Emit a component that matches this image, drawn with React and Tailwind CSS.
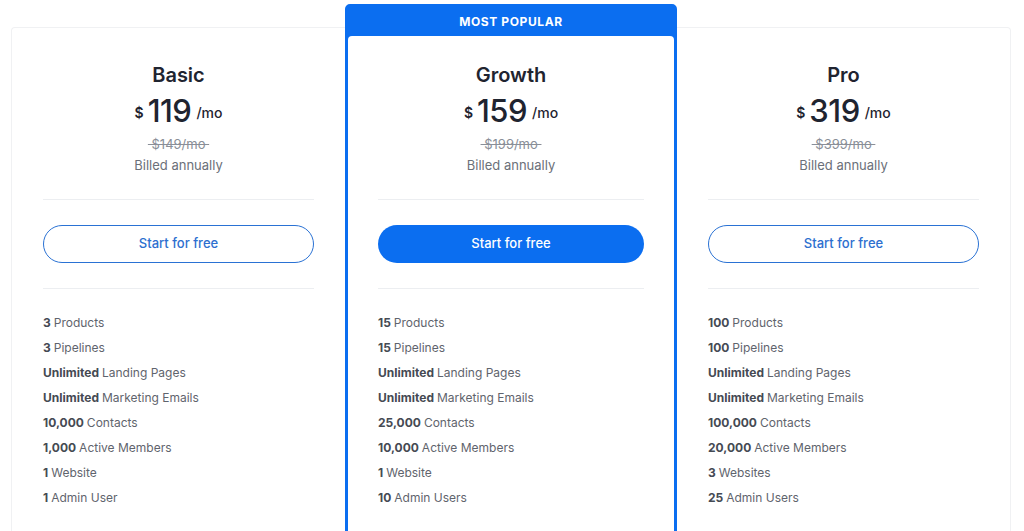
const plans = [
  {
    name: 'Basic',
    price: '119',
    old: '$149/mo',
    features: [
      ['3', 'Products'],
      ['3', 'Pipelines'],
      ['Unlimited', 'Landing Pages'],
      ['Unlimited', 'Marketing Emails'],
      ['10,000', 'Contacts'],
      ['1,000', 'Active Members'],
      ['1', 'Website'],
      ['1', 'Admin User'],
    ],
  },
  {
    name: 'Growth',
    price: '159',
    old: '$199/mo',
    popular: true,
    features: [
      ['15', 'Products'],
      ['15', 'Pipelines'],
      ['Unlimited', 'Landing Pages'],
      ['Unlimited', 'Marketing Emails'],
      ['25,000', 'Contacts'],
      ['10,000', 'Active Members'],
      ['1', 'Website'],
      ['10', 'Admin Users'],
    ],
  },
  {
    name: 'Pro',
    price: '319',
    old: '$399/mo',
    features: [
      ['100', 'Products'],
      ['100', 'Pipelines'],
      ['Unlimited', 'Landing Pages'],
      ['Unlimited', 'Marketing Emails'],
      ['100,000', 'Contacts'],
      ['20,000', 'Active Members'],
      ['3', 'Websites'],
      ['25', 'Admin Users'],
    ],
  },
];

const PlanBody = ({ plan }) => (
  <div className="flex flex-col">
    <div className="flex flex-col items-center">
      <h3 className="text-[20px] leading-[28px] font-semibold text-[#1f2430]">{plan.name}</h3>
      <div className="mt-1 flex items-center h-9 text-[#1f2430]">
        <span className="text-[14px] font-semibold mr-[4px] mt-[2px]">$</span>
        <span className="text-[31px] leading-9 font-medium tracking-[-0.5px]">{plan.price}</span>
        <span className="text-[14px] font-medium ml-[5px] mt-[2px]">/mo</span>
      </div>
      <span className="mt-[5px] text-[13px] leading-5 text-[#8a8f98] line-through decoration-[#8a8f98]">
        {'\u00a0' + plan.old + '\u00a0'}
      </span>
      <span className="mt-px text-[13px] leading-5 text-[#6b7079]">Billed annually</span>
    </div>
    <div className="mt-6 h-px bg-[#eceef1]" />
    {plan.popular ? (
      <button className="mt-[25px] h-[38px] rounded-full bg-[#0b6ef0] text-white text-[13px] font-medium">
        Start for free
      </button>
    ) : (
      <button className="mt-[25px] h-[38px] rounded-full border border-[#2a72d4] text-[#2d6fcf] text-[13px] font-medium">
        Start for free
      </button>
    )}
    <div className="mt-[25px] h-px bg-[#eceef1]" />
    <ul className="mt-[21px] pb-6">
      {plan.features.map(([b, t]) => (
        <li key={t} className="h-[25px] flex items-center text-[12px] text-[#5f646d]">
          <span className="font-bold text-[#454a53] mr-[3px]">{b}</span>
          {t}
        </li>
      ))}
    </ul>
  </div>
);

export default function App() {
  return (
    <div className="min-h-[531px] bg-white pl-[11px] pr-[13px] pt-1 font-['Inter',sans-serif] overflow-hidden">
      <div className="flex items-start">
        <div className="mt-[23px] w-[334px] shrink-0 rounded-l border border-r-0 border-[#f0f1f3] px-[31px] pt-[33px]">
          <PlanBody plan={plans[0]} />
        </div>
        <div className="w-[332px] shrink-0 rounded-[5px] border-[3px] border-[#0b6ef0] bg-[#0b6ef0]">
          <div className="h-[29px] flex items-center justify-center text-white text-[12px] font-bold tracking-[0.6px]">
            MOST POPULAR
          </div>
          <div className="bg-white rounded-t-[4px] px-[30px] pt-[25px]">
            <PlanBody plan={plans[1]} />
          </div>
        </div>
        <div className="mt-[23px] flex-1 rounded-r border border-l-0 border-[#f0f1f3] px-[31px] pt-[33px]">
          <PlanBody plan={plans[2]} />
        </div>
      </div>
    </div>
  );
}
